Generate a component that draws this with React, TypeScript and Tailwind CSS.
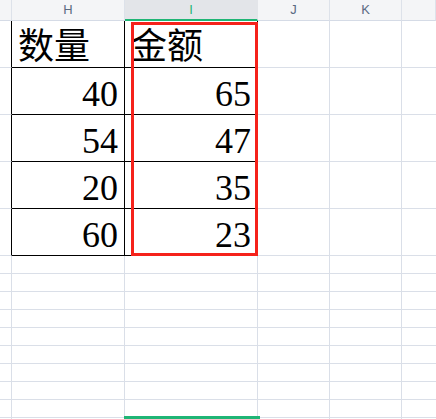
import React from "react";

const cols = [
  { key: "G", w: "w-[12px]" },
  { key: "H", w: "w-[113px]" },
  { key: "I", w: "w-[133px]" },
  { key: "J", w: "w-[72px]" },
  { key: "K", w: "w-[72px]" },
  { key: "L", w: "flex-1" },
];

const rows = [
  ["数量", "金额"],
  ["40", "65"],
  ["54", "47"],
  ["20", "35"],
  ["60", "23"],
];

const serif = "font-['Liberation_Serif','Noto_Sans_CJK_SC',serif]";

function HeaderRow() {
  return (
    <div className="flex h-[21px]">
      {cols.map((c) => {
        const selected = c.key === "I";
        return (
          <div
            key={c.key}
            className={`${c.w} shrink-0 flex items-center justify-center border-r border-b text-[13px] font-['Liberation_Sans',sans-serif] ${
              selected
                ? "bg-[#e3e5e9] border-r-[#e3e5e9] border-b-2 border-b-[#1fb575] text-[#1fb575]"
                : "bg-[#f4f5f7] border-r-[#dde2ea] border-b-[#d5dbe6] text-[#5a6a82]"
            }`}
          >
            {c.key === "G" || c.key === "L" ? "" : c.key}
          </div>
        );
      })}
    </div>
  );
}

function DataRow({ cells, first }: { cells: string[]; first: boolean }) {
  return (
    <div className="flex h-[47px]">
      <div className="w-[12px] shrink-0 border-r border-b border-r-black border-b-[#dadfe8]" />
      {cells.map((t, i) => (
        <div
          key={i}
          className={`${i === 0 ? "w-[113px]" : "w-[133px]"} shrink-0 flex items-end border-r border-b border-black pb-[2px] text-[36px] leading-none text-black ${serif} ${
            first ? "justify-start pl-[6px]" : "justify-end pr-[6px]"
          }`}
        >
          {t}
        </div>
      ))}
      <div className="w-[72px] shrink-0 border-r border-b border-[#dadfe8]" />
      <div className="w-[72px] shrink-0 border-r border-b border-[#dadfe8]" />
      <div className="flex-1 border-b border-[#dadfe8]" />
    </div>
  );
}

function EmptyRow() {
  return (
    <div className="flex h-[18px]">
      {cols.map((c) => (
        <div
          key={c.key}
          className={`${c.w} shrink-0 border-b border-[#dadfe8] ${c.key === "L" ? "" : "border-r"}`}
        />
      ))}
    </div>
  );
}

export default function App() {
  return (
    <div className="relative h-[419px] w-[436px] overflow-hidden bg-white">
      <HeaderRow />
      {rows.map((r, i) => (
        <DataRow key={i} cells={r} first={i === 0} />
      ))}
      {Array.from({ length: 10 }).map((_, i) => (
        <EmptyRow key={i} />
      ))}
      {/* selection box */}
      <div className="absolute left-[131px] top-[22px] w-[127px] h-[234px] border-[3px] border-[#f5221b] pointer-events-none" />
      {/* column indicator */}
      <div className="absolute left-[124px] bottom-0 w-[136px] h-[3px] bg-[#1fb575]" />
    </div>
  );
}
